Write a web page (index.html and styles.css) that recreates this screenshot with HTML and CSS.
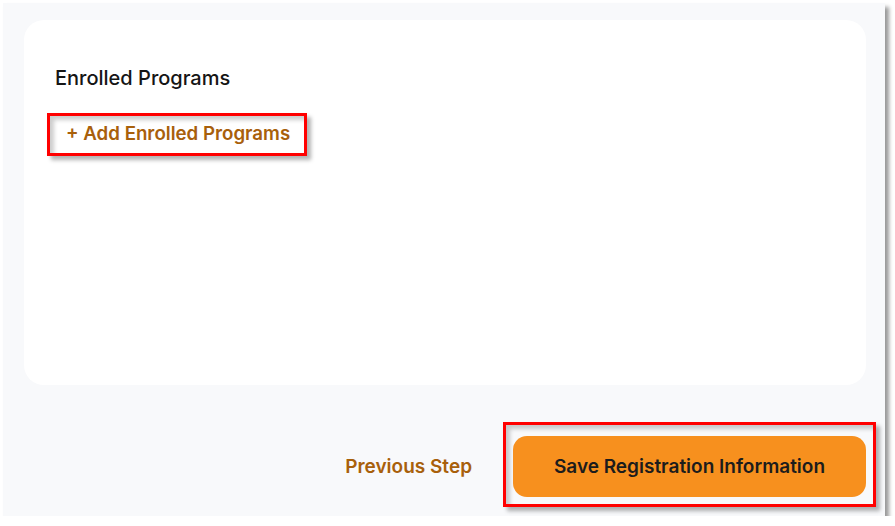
FILE: index.html
```html
<!DOCTYPE html>
<html lang="en">
<head>
  <meta charset="UTF-8">
  <meta name="viewport" content="width=device-width, initial-scale=1.0">
  <title>Registration - Enrolled Programs</title>

  <link rel="stylesheet" href="styles.css">
</head>

<body>
  <div class="frame">
    <section class="card">
      <h2 class="card-title">Enrolled Programs</h2>
      <div class="mark mark-add">
        <button class="link-btn">+ Add Enrolled Programs</button>
      </div>
    </section>

    <footer class="actions">
      <button class="link-btn prev-step">Previous Step</button>
      <div class="mark mark-save">
        <button class="primary-btn">Save Registration Information</button>
      </div>
    </footer>
  </div>
</body>
</html>
```

FILE: styles.css
```css
body {
  margin: 0;
  background-color: #fff;
  font-family: Inter, "Noto Sans", sans-serif;
}

.frame {
  box-sizing: border-box;
  width: 882px;
  height: 513px;
  margin: 3px 0 0 3px;
  padding: 17px 19px 9px 21px;
  background-color: #f8f9fb;
  box-shadow: 4px 4px 4px rgba(0, 0, 0, .4);
  display: flex;
  flex-direction: column;
}

.card {
  box-sizing: border-box;
  height: 365px;
  padding: 46px 31px 0;
  background-color: #fff;
  border-radius: 20px;
  display: flex;
  flex-direction: column;
  align-items: flex-start;
}

.card-title {
  margin: 0;
  font-size: 20px;
  line-height: 24px;
  font-weight: 500;
  color: #151515;
}

button {
  font-family: inherit;
  border: none;
  background: none;
  cursor: pointer;
}

.link-btn {
  padding: 0;
  font-size: 19px;
  line-height: 24px;
  font-weight: 600;
  color: #a8600b;
}

/* red callout boxes around the highlighted controls */
.mark {
  border: 3px solid #f00;
  box-shadow: 4px 4px 4px rgba(0, 0, 0, .3), inset 4px 4px 4px rgba(0, 0, 0, .2);
  background-color: #fff;
}

.mark-add {
  margin: 23px 0 0 -8px;
  padding: 6px 14px 7px 16px;
}

.mark-add .link-btn {
  font-size: 18.7px;
}

.actions {
  margin-top: 37px;
  display: flex;
  align-items: center;
  justify-content: flex-end;
  gap: 31px;
}

.prev-step {
  margin-top: 4px;
}

.mark-save {
  margin-right: -10px;
  padding: 11px 7px 7px;
  background-color: #f8f9fb;
}

.primary-btn {
  display: block;
  width: 353px;
  height: 61px;
  padding: 0;
  border-radius: 14px;
  background-color: #f7901e;
  font-size: 19px;
  font-weight: 600;
  color: #1c1c1c;
}
```
